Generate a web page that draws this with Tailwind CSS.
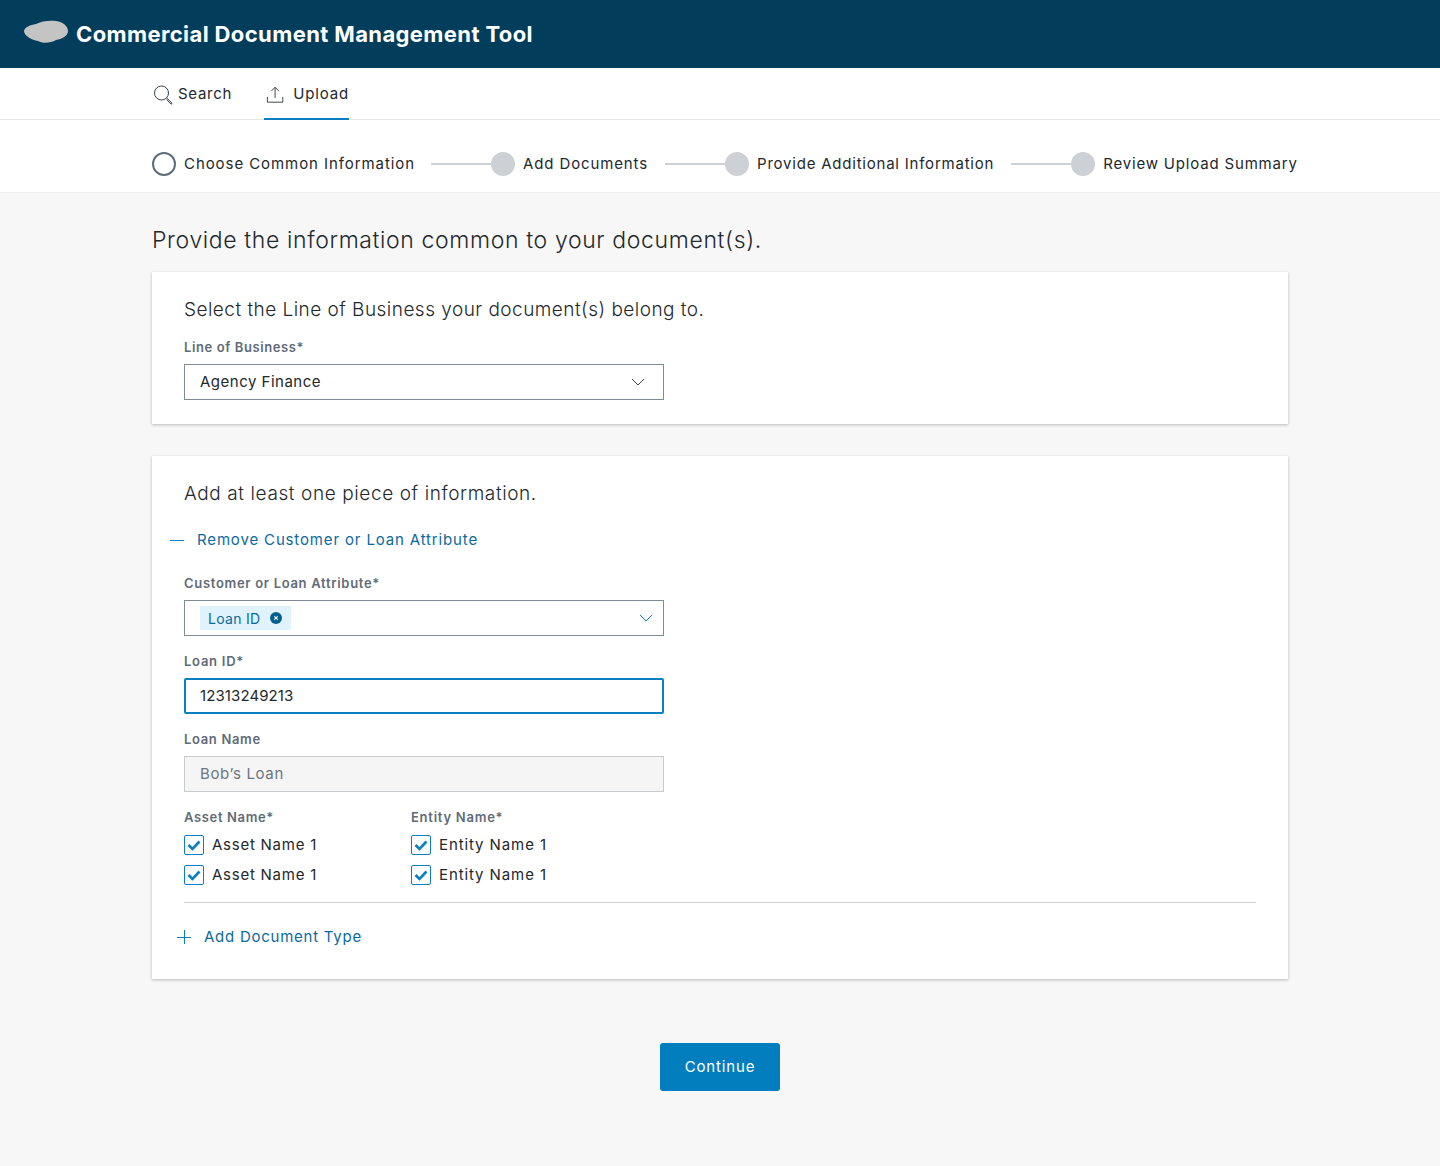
<!DOCTYPE html>
<html lang="en">
<head>
  <meta charset="UTF-8" />
  <meta name="viewport" content="width=device-width, initial-scale=1" />
  <title>Commercial Document Management Tool</title>
  <script src="https://cdn.jsdelivr.net/npm/@tailwindcss/browser@4"></script>
</head>
<body class="bg-[#f7f7f7] min-h-[1166px] font-['Inter',sans-serif] text-[15px] text-[#23282d]">
  <!-- Header -->
  <header class="h-[68px] bg-[#023e5c] flex items-center pl-[24px]">
    <svg width="44" height="24" viewBox="0 0 44 24" class="mr-[8px] -mt-[4px]"><path d="M0 11 C1 7 6 5 12 4 C17 1 26 0 32 1 C39 2 44 6 44 11 C44 16 38 19 32 20 C27 23 19 24 14 21 C8 20 0 16 0 11 Z" fill="#c4c4c4"/></svg>
    <h1 class="text-[22px] font-bold text-white tracking-[0.39px]">Commercial Document Management Tool</h1>
  </header>

  <!-- Tabs -->
  <nav class="h-[52px] bg-white border-b border-[#e6e8ea] pl-[152px] flex">
    <a class="flex items-center h-[52px] gap-[5px] tracking-[0.7px]">
      <svg width="21" height="21" viewBox="0 0 21 21" fill="none" stroke="#3a4148" stroke-width="1"><circle cx="9.5" cy="9" r="7"/><path d="M14.6 14 L15.8 15.2 M15.2 14.4 L19.8 19 Q20.2 20 19 20.2 L14.8 15.6"/></svg>
      Search
    </a>
    <a class="flex items-center h-[52px] ml-[32px] gap-[8px] tracking-[0.85px] shadow-[inset_0_-2px_0_#0b7fc0] w-[85px]">
      <svg width="21" height="21" viewBox="0 0 21 21" fill="none" stroke="#3a4148" stroke-width="1" class="ml-[1px]"><path d="M10.5 14 V3 M6.5 7 L10.5 3 L14.5 7 M2.5 13 V18.5 H18.5 V13"/></svg>
      Upload
    </a>
  </nav>

  <!-- Stepper -->
  <div class="h-[73px] bg-white border-b border-[#ebedee] pl-[152px] pt-[16px] flex items-center">
    <span class="w-[24px] h-[24px] rounded-full border-2 border-[#5f6e7c] bg-white"></span>
    <span class="ml-[8px] tracking-[0.93px]">Choose Common Information</span>
    <span class="ml-[16px] w-[60px] h-[2px] bg-[#cdd1d5]"></span>
    <span class="w-[24px] h-[24px] rounded-full bg-[#cdd1d5]"></span>
    <span class="ml-[8px] tracking-[0.87px]">Add Documents</span>
    <span class="ml-[17px] w-[60px] h-[2px] bg-[#cdd1d5]"></span>
    <span class="w-[24px] h-[24px] rounded-full bg-[#cdd1d5]"></span>
    <span class="ml-[8px] tracking-[0.78px]">Provide Additional Information</span>
    <span class="ml-[17px] w-[60px] h-[2px] bg-[#cdd1d5]"></span>
    <span class="w-[24px] h-[24px] rounded-full bg-[#cdd1d5]"></span>
    <span class="ml-[8px] tracking-[0.82px]">Review Upload Summary</span>
  </div>

  <main class="w-[1136px] ml-[152px]">
    <h2 class="mt-[31px] h-[32px] leading-[32px] text-[23px] font-light tracking-[0.63px]">Provide the information common to your document(s).</h2>

    <section class="mt-[16px] h-[152px] bg-white shadow-[0_1px_3px_rgba(0,0,0,0.25)] px-[32px] pt-[24px]">
      <h3 class="text-[19px] leading-[28px] font-light tracking-[0.47px]">Select the Line of Business your document(s) belong to.</h3>
      <label class="block mt-[13px] text-[13px] leading-[20px] font-semibold text-[#5f6b77] tracking-[0.6px]">Line of Business*</label>
      <div class="mt-[7px] w-[480px] h-[36px] border border-[#7f8b96] flex items-center justify-between pl-[15px] pr-[18px] tracking-[0.5px]">
        Agency Finance
        <svg width="14" height="8" viewBox="0 0 14 8" fill="none" stroke="#3a4148"><path d="M1 1 L7 7 L13 1"/></svg>
      </div>
    </section>

    <section class="mt-[32px] h-[523px] bg-white shadow-[0_1px_3px_rgba(0,0,0,0.25)] px-[32px] pt-[24px]">
      <h3 class="text-[19px] leading-[28px] font-light tracking-[0.6px]">Add at least one piece of information.</h3>

      <a class="mt-[20px] flex items-center h-[24px] -ml-[14px] gap-[13px] text-[#0b6a9e] tracking-[0.85px]">
        <span class="w-[14px] h-px bg-[#0b7fc0]"></span>
        Remove Customer or Loan Attribute
      </a>

      <label class="block mt-[21px] text-[13px] leading-[20px] font-semibold text-[#5f6b77] tracking-[0.7px]">Customer or Loan Attribute*</label>
      <div class="mt-[7px] w-[480px] h-[36px] border border-[#7f8b96] flex items-center justify-between pl-[15px] pr-[10px]">
        <span class="h-[24px] bg-[#e0f3fc] flex items-center pl-[8px] pr-[9px] gap-[10px] text-[14px] text-[#0b6a9e] tracking-[0.3px]">
          Loan ID
          <svg width="12" height="12" viewBox="0 0 12 12"><circle cx="6" cy="6" r="6" fill="#04608f"/><path d="M4.3 4.3 L7.7 7.7 M7.7 4.3 L4.3 7.7" stroke="white" stroke-width="1.1"/></svg>
        </span>
        <svg width="14" height="8" viewBox="0 0 14 8" fill="none" stroke="#0b7fc0"><path d="M1 1 L7 7 L13 1"/></svg>
      </div>

      <label class="block mt-[15px] text-[13px] leading-[20px] font-semibold text-[#5f6b77] tracking-[0.75px]">Loan ID*</label>
      <div class="mt-[7px] w-[480px] h-[36px] border-2 border-[#0b7fc0] rounded-[2px] flex items-center pl-[14px] tracking-[0.1px]">12313249213</div>

      <label class="block mt-[15px] text-[13px] leading-[20px] font-semibold text-[#5f6b77] tracking-[0.67px]">Loan Name</label>
      <div class="mt-[7px] w-[480px] h-[36px] border border-[#c9cccf] bg-[#f5f5f5] flex items-center pl-[15px] text-[#6b7681] tracking-[0.65px]">Bob’s Loan</div>

      <div class="mt-[15px] flex">
        <div class="w-[227px]">
          <label class="block text-[13px] leading-[20px] font-semibold text-[#5f6b77] tracking-[0.64px]">Asset Name*</label>
          <div class="mt-[3px] flex items-center h-[30px] gap-[8px] tracking-[0.75px]">
            <svg width="20" height="20" viewBox="0 0 20 20" fill="none"><rect x="0.5" y="0.5" width="19" height="19" rx="1.5" stroke="#0b7fc0"/><path d="M4.5 10 L8.5 14 L15.5 6.5" stroke="#0b7fc0" stroke-width="2.6"/></svg>
            Asset Name 1
          </div>
          <div class="flex items-center h-[30px] gap-[8px] tracking-[0.75px]">
            <svg width="20" height="20" viewBox="0 0 20 20" fill="none"><rect x="0.5" y="0.5" width="19" height="19" rx="1.5" stroke="#0b7fc0"/><path d="M4.5 10 L8.5 14 L15.5 6.5" stroke="#0b7fc0" stroke-width="2.6"/></svg>
            Asset Name 1
          </div>
        </div>
        <div>
          <label class="block text-[13px] leading-[20px] font-semibold text-[#5f6b77] tracking-[0.75px]">Entity Name*</label>
          <div class="mt-[3px] flex items-center h-[30px] gap-[8px] tracking-[0.9px]">
            <svg width="20" height="20" viewBox="0 0 20 20" fill="none"><rect x="0.5" y="0.5" width="19" height="19" rx="1.5" stroke="#0b7fc0"/><path d="M4.5 10 L8.5 14 L15.5 6.5" stroke="#0b7fc0" stroke-width="2.6"/></svg>
            Entity Name 1
          </div>
          <div class="flex items-center h-[30px] gap-[8px] tracking-[0.9px]">
            <svg width="20" height="20" viewBox="0 0 20 20" fill="none"><rect x="0.5" y="0.5" width="19" height="19" rx="1.5" stroke="#0b7fc0"/><path d="M4.5 10 L8.5 14 L15.5 6.5" stroke="#0b7fc0" stroke-width="2.6"/></svg>
            Entity Name 1
          </div>
        </div>
      </div>

      <div class="mt-[12px] border-t border-[#cfd2d4]"></div>

      <a class="mt-[22px] flex items-center h-[24px] -ml-[7px] gap-[13px] text-[#0b6a9e] tracking-[0.75px]">
        <svg width="14" height="14" viewBox="0 0 14 14" stroke="#0b7fc0"><path d="M0 7.5 H14 M7.5 0 V14"/></svg>
        Add Document Type
      </a>
    </section>

    <div class="mt-[64px] flex justify-center">
      <button class="w-[120px] h-[48px] bg-[#027dbd] rounded-[3px] text-white tracking-[0.85px]">Continue</button>
    </div>
  </main>
</body>
</html>
